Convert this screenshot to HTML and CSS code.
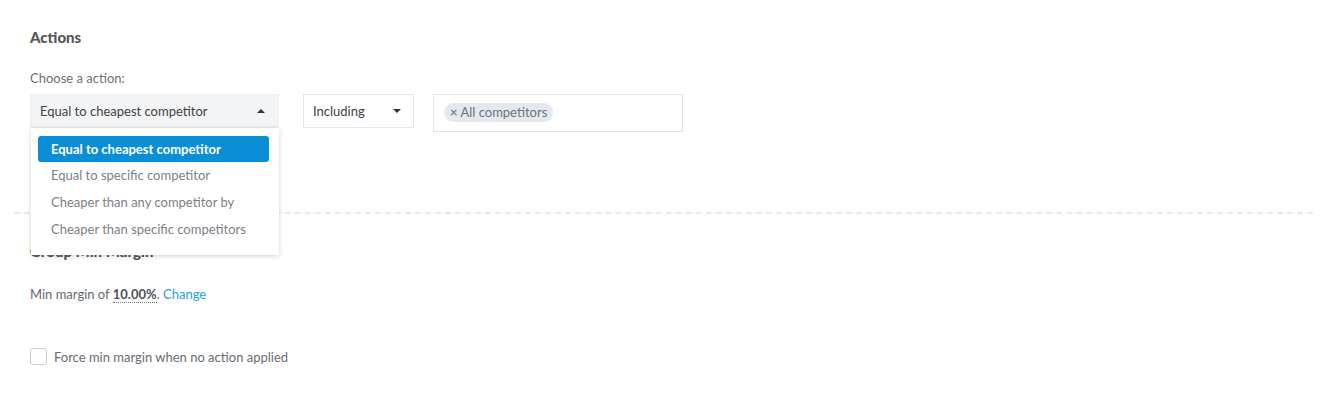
FILE: index.html
```html
<!DOCTYPE html>
<html lang="en">

<head>
  <meta charset="UTF-8" />
  <title>Actions</title>
  <link rel="stylesheet" href="styles.css">
</head>

<body>
  <div class="section">
    <h3 class="title">Actions</h3>
    <p class="lbl">Choose a action:</p>
    <div class="row">
      <div class="select-wrap">
        <div class="select open">
          <span>Equal to cheapest competitor</span>
          <span class="caret up"></span>
        </div>
        <ul class="menu">
          <li class="active">Equal to cheapest competitor</li>
          <li>Equal to specific competitor</li>
          <li>Cheaper than any competitor by</li>
          <li>Cheaper than specific competitors</li>
        </ul>
      </div>
      <div class="select small">
        <span>Including</span>
        <span class="caret"></span>
      </div>
      <div class="tags">
        <span class="tag"><span class="x">&times;</span> All competitors</span>
      </div>
    </div>
  </div>

  <hr class="sep">

  <div class="section">
    <h3 class="title">Group Min Margin</h3>
    <p class="txt">Min margin of <b class="val">10.00%</b>. <a href="#" class="link">Change</a></p>
    <label class="check"><span class="box"></span>Force min margin when no action applied</label>
  </div>
</body>

</html>
```

FILE: styles.css
```css
body {
  margin: 0;
  font-family: Lato, "Open Sans", sans-serif;
  font-size: 13px;
  color: #666b73;
  background: #fff;
}

.section {
  padding: 0 30px;
}

.title {
  margin: 0;
  padding-top: 29px;
  font-size: 15px;
  font-weight: 900;
  color: #555;
  line-height: 17px;
}

.lbl {
  margin: 24px 0 8px;
  line-height: 16px;
  color: #6c7077;
}

.row {
  display: flex;
  align-items: flex-start;
  gap: 24px;
}

.select-wrap {
  position: relative;
  width: 249px;
}

.select {
  display: flex;
  align-items: center;
  justify-content: space-between;
  height: 32px;
  padding: 0 13px 0 9px;
  border: 1px solid #e6e7ea;
  background: #fff;
  color: #3f4248;
}

.select.open {
  background: #f3f4f6;
  border-color: #eceef0;
}

.select.small {
  width: 88px;
  padding-right: 12px;
  margin-right: -5px;
}

.caret {
  width: 0;
  height: 0;
  border-left: 4px solid transparent;
  border-right: 4px solid transparent;
  border-top: 4px solid #333;
}

.caret.up {
  border-top: 0;
  border-bottom: 4px solid #333;
}

.menu {
  position: absolute;
  top: 34px;
  left: 1px;
  right: 0;
  margin: 0;
  padding: 8px 10px 12px 7px;
  list-style: none;
  background: #fff;
  box-shadow: 0 1px 5px rgba(0, 0, 0, 0.18);
  z-index: 2;
}

.menu li {
  height: 27px;
  line-height: 27px;
  padding-left: 13px;
  color: #7b7f86;
}

.menu li.active {
  height: 26px;
  line-height: 26px;
  background: #0a8fd7;
  color: #fff;
  font-weight: bold;
  border-radius: 3px;
}

.tags {
  width: 233px;
  height: 36px;
  padding: 0 5px 0 10px;
  border: 1px solid #e0e2e5;
  display: flex;
  align-items: center;
}

.tag {
  background: #e4e9ef;
  color: #6d737c;
  border-radius: 10px;
  padding: 1px 6px 2px 6px;
  line-height: 16px;
  margin-top: -2px;
}

.tag .x {
  font-weight: bold;
  font-size: 13px;
  color: #7c828a;
}

.sep {
  margin: 80px 10px 0 14px;
  border: 0;
  border-top: 2px dashed #eaeaea;
}

.section .title + .txt {
  margin-top: 26px;
}

.txt {
  margin: 0;
  line-height: 16px;
  color: #646a73;
}

.val {
  color: #4d525a;
  border-bottom: 1px dotted #777;
}

.link {
  color: #1ba2df;
  text-decoration: none;
}

.check {
  display: flex;
  align-items: center;
  margin-top: 46px;
  color: #676c75;
}

.box {
  width: 15px;
  height: 15px;
  border: 1px solid #c8cbd0;
  border-radius: 3px;
  margin-right: 7px;
}
```
